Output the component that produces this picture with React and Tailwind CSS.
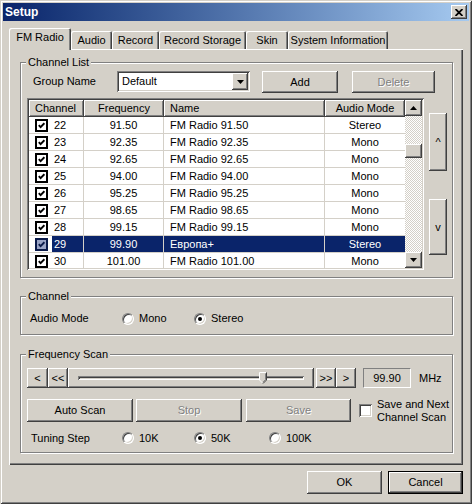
import React from 'react';

const raised = 'bg-[#d4d0c8] shadow-[inset_-1px_-1px_#404040,inset_1px_1px_#fff,inset_-2px_-2px_#808080,inset_2px_2px_#d4d0c8]';
const sunken = 'shadow-[inset_1px_1px_#808080,inset_-1px_-1px_#fff,inset_2px_2px_#404040,inset_-2px_-2px_#d4d0c8]';
const groupBox = 'border border-[#808080] shadow-[inset_1px_1px_#fff,1px_1px_#fff]';
const legendCls = 'ml-[5px] px-[2px] bg-[#d4d0c8] leading-[13px]';
const disabledText = 'text-[#808080] [text-shadow:1px_1px_#fff]';

const channels = [
  { ch: 22, freq: '91.50', name: 'FM Radio 91.50', mode: 'Stereo' },
  { ch: 23, freq: '92.35', name: 'FM Radio 92.35', mode: 'Mono' },
  { ch: 24, freq: '92.65', name: 'FM Radio 92.65', mode: 'Mono' },
  { ch: 25, freq: '94.00', name: 'FM Radio 94.00', mode: 'Mono' },
  { ch: 26, freq: '95.25', name: 'FM Radio 95.25', mode: 'Mono' },
  { ch: 27, freq: '98.65', name: 'FM Radio 98.65', mode: 'Mono' },
  { ch: 28, freq: '99.15', name: 'FM Radio 99.15', mode: 'Mono' },
  { ch: 29, freq: '99.90', name: 'Европа+', mode: 'Stereo', selected: true },
  { ch: 30, freq: '101.00', name: 'FM Radio 101.00', mode: 'Mono' },
];

const tabs = [
  { label: 'FM Radio', cls: 'w-[62px]', active: true },
  { label: 'Audio', cls: 'w-[41px]' },
  { label: 'Record', cls: 'w-[47px]' },
  { label: 'Record Storage', cls: 'w-[87px]' },
  { label: 'Skin', cls: 'w-[42px]' },
  { label: 'System Information', cls: 'w-[100px]' },
];

const CheckMark = ({ color = '#000' }) => (
  <svg width="7" height="7" viewBox="0 0 7 7">
    <polyline points="0.8,3.2 2.6,5.2 6.4,1.2" fill="none" stroke={color} strokeWidth="1.9" />
  </svg>
);

const Triangle = ({ up }) => (
  <svg width="7" height="4" viewBox="0 0 7 4">
    <polygon points={up ? '0,4 7,4 3.5,0' : '0,0 7,0 3.5,4'} fill="#000" />
  </svg>
);

const Radio = ({ checked }) => (
  <span className="w-[12px] h-[12px] rounded-full bg-white flex items-center justify-center border border-t-[#808080] border-l-[#808080] border-b-white border-r-white shadow-[inset_1px_1px_#404040,inset_-1px_-1px_#d4d0c8]">
    {checked && <span className="w-[4px] h-[4px] rounded-full bg-black" />}
  </span>
);

const RadioItem = ({ label, checked, cls }) => (
  <div className={`flex items-center gap-[5px] ${cls}`}>
    <Radio checked={checked} />
    <span>{label}</span>
  </div>
);

const ListCheck = ({ selected }) => (
  <span
    className={`w-[13px] h-[13px] border-2 flex items-center justify-center ${
      selected ? 'border-[#0a1a4a] bg-[#9aa4c6]' : 'border-black bg-white'
    }`}
  >
    <CheckMark color={selected ? '#0a1a4a' : '#000'} />
  </span>
);

const SliderThumb = () => (
  <svg width="8" height="12" viewBox="0 0 8 12">
    <path d="M0.5 0.5 H7.5 V8 L4 11.5 L0.5 8 Z" fill="#d4d0c8" />
    <path d="M0.5 8 V0.5 H7" fill="none" stroke="#fff" />
    <path d="M0.5 8 L3.5 11" fill="none" stroke="#fff" />
    <path d="M7.5 0.5 V8 L4 11.5" fill="none" stroke="#404040" />
    <path d="M6.5 1.5 V7.6 L4 10.2" fill="none" stroke="#808080" />
  </svg>
);

const App = () => {
  return (
    <div className="w-[472px] h-[504px] bg-[#d4d0c8] p-[3px] flex flex-col shadow-[inset_1px_1px_#d4d0c8,inset_-1px_-1px_#404040,inset_2px_2px_#fff,inset_-2px_-2px_#808080] font-['Liberation_Sans',Arial,sans-serif] text-[11px] leading-[13px] text-black select-none">
      {/* title bar */}
      <div className="h-[18px] flex items-center justify-between pl-[2px] pr-[2px] bg-linear-to-r from-[#0a246a] to-[#a6caf0]">
        <span className="text-white font-bold text-[12px] leading-[14px]">Setup</span>
        <div className={`w-[16px] h-[14px] flex items-center justify-center ${raised}`}>
          <svg width="8" height="7" viewBox="0 0 8 7">
            <path d="M0.5 0 L7.5 7 M7.5 0 L0.5 7" stroke="#000" strokeWidth="1.8" />
          </svg>
        </div>
      </div>

      <div className="flex flex-col px-[6px] pt-[7px]">
        {/* tabs */}
        <div className="h-[21px] flex items-end">
          {tabs.map((t) => (
            <div
              key={t.label}
              className={`${t.cls} flex items-center justify-center bg-[#d4d0c8] rounded-t-[2px] shadow-[inset_1px_1px_#fff,inset_-1px_0_#404040,inset_-2px_0_#808080] ${
                t.active ? 'h-[22px] -mb-px relative z-10 pb-[3px]' : 'h-[18px] pt-[1px]'
              }`}
            >
              {t.label}
            </div>
          ))}
        </div>

        {/* panel */}
        <div className="h-[416px] flex flex-col pl-[11px] pt-[7px] shadow-[inset_1px_1px_#fff,inset_-1px_-1px_#404040,inset_-2px_-2px_#808080]">
          {/* Channel List */}
          <fieldset className={`w-[433px] ${groupBox}`}>
            <legend className={legendCls}>Channel List</legend>
            <div className="flex items-start mt-[2px] pl-[12px]">
              <div className="w-[84px] h-[21px] flex items-center">Group Name</div>
              <div className={`w-[133px] h-[21px] bg-white flex items-center p-[2px] ${sunken}`}>
                <span className="flex-1 pl-[3px]">Default</span>
                <div className={`w-[16px] h-[17px] flex items-center justify-center ${raised}`}>
                  <Triangle />
                </div>
              </div>
              <div className={`ml-[12px] w-[76px] h-[22px] flex items-center justify-center ${raised}`}>Add</div>
              <div className={`ml-[14px] w-[83px] h-[22px] flex items-center justify-center ${raised} ${disabledText}`}>
                Delete
              </div>
            </div>

            <div className="flex mt-[5px] pl-[6px] pb-[7px]">
              <div className={`w-[397px] h-[172px] p-[2px] flex bg-white ${sunken}`}>
                <div className="w-[376px] flex flex-col overflow-hidden">
                  <div className="h-[17px] flex shrink-0">
                    <div className={`w-[55px] flex items-center pl-[6px] ${raised}`}>Channel</div>
                    <div className={`w-[80px] flex items-center justify-center ${raised}`}>Frequency</div>
                    <div className={`w-[161px] flex items-center pl-[6px] ${raised}`}>Name</div>
                    <div className={`w-[80px] flex items-center justify-center ${raised}`}>Audio Mode</div>
                  </div>
                  {channels.map((c) => (
                    <div key={c.ch} className="h-[17px] shrink-0 flex border-b border-[#d4d0c8]">
                      <div className="w-[55px] flex items-stretch border-r border-[#d4d0c8]">
                        <div className="w-[23px] flex items-center pl-[6px]">
                          <ListCheck selected={c.selected} />
                        </div>
                        <div className={`flex-1 flex items-center pl-[2px] ${c.selected ? 'bg-[#0a246a] text-white' : ''}`}>
                          {c.ch}
                        </div>
                      </div>
                      <div className={`w-[80px] flex items-center justify-center border-r border-[#d4d0c8] ${c.selected ? 'bg-[#0a246a] text-white' : ''}`}>
                        {c.freq}
                      </div>
                      <div className={`w-[161px] flex items-center pl-[6px] border-r border-[#d4d0c8] ${c.selected ? 'bg-[#0a246a] text-white' : ''}`}>
                        {c.name}
                      </div>
                      <div className={`w-[80px] flex items-center justify-center ${c.selected ? 'bg-[#0a246a] text-white' : ''}`}>
                        {c.mode}
                      </div>
                    </div>
                  ))}
                </div>
                {/* scrollbar */}
                <div className="w-[17px] flex flex-col bg-[image:repeating-conic-gradient(#d4d0c8_0_25%,#ffffff_0_50%)] bg-size-[2px_2px]">
                  <div className={`h-[16px] flex items-center justify-center ${raised}`}>
                    <Triangle up />
                  </div>
                  <div className="flex-1 flex flex-col">
                    <div className={`mt-[28px] h-[14px] ${raised}`} />
                  </div>
                  <div className={`h-[16px] flex items-center justify-center ${raised}`}>
                    <Triangle />
                  </div>
                </div>
              </div>
              <div className="ml-[5px] w-[18px] flex flex-col">
                <div className={`mt-[15px] h-[58px] flex items-center justify-center ${raised}`}>^</div>
                <div className={`mt-[28px] h-[56px] flex items-center justify-center ${raised}`}>v</div>
              </div>
            </div>
          </fieldset>

          {/* Channel */}
          <fieldset className={`w-[433px] mt-[12px] ${groupBox}`}>
            <legend className={legendCls}>Channel</legend>
            <div className="flex items-center h-[17px] mt-[7px] mb-[7px] pl-[9px]">
              <div className="w-[92px]">Audio Mode</div>
              <RadioItem label="Mono" cls="w-[72px]" />
              <RadioItem label="Stereo" checked />
            </div>
          </fieldset>

          {/* Frequency Scan */}
          <fieldset className={`w-[433px] mt-[13px] ${groupBox}`}>
            <legend className={legendCls}>Frequency Scan</legend>
            <div className="flex items-center h-[20px] mt-[7px] pl-[6px]">
              <div className={`w-[21px] h-[20px] flex items-center justify-center ${raised}`}>&lt;</div>
              <div className={`w-[20px] h-[20px] flex items-center justify-center ${raised}`}>&lt;&lt;</div>
              <div className={`w-[246px] h-[20px] flex items-center px-[10px] ${raised}`}>
                <div className="flex-1 h-[4px] relative shadow-[inset_1px_1px_#808080,inset_-1px_-1px_#fff,inset_2px_2px_#404040]">
                  <div className="absolute left-[181px] top-[-4px] flex">
                    <SliderThumb />
                  </div>
                </div>
              </div>
              <div className={`ml-[2px] w-[20px] h-[20px] flex items-center justify-center ${raised}`}>&gt;&gt;</div>
              <div className={`w-[20px] h-[20px] flex items-center justify-center ${raised}`}>&gt;</div>
              <div className="ml-[7px] w-[48px] h-[20px] flex items-center justify-center border border-t-[#808080] border-l-[#808080] border-b-white border-r-white">
                99.90
              </div>
              <span className="ml-[8px]">MHz</span>
            </div>

            <div className="flex items-center h-[23px] mt-[11px] pl-[6px]">
              <div className={`w-[106px] h-[23px] flex items-center justify-center ${raised}`}>Auto Scan</div>
              <div className={`ml-[3px] w-[106px] h-[23px] flex items-center justify-center ${raised} ${disabledText}`}>Stop</div>
              <div className={`ml-[4px] w-[105px] h-[23px] flex items-center justify-center ${raised} ${disabledText}`}>Save</div>
              <span className={`ml-[8px] w-[13px] h-[13px] bg-white ${sunken}`} />
              <span className="ml-[5px] leading-[13px]">
                Save and Next
                <br />
                Channel Scan
              </span>
            </div>

            <div className="flex items-center h-[16px] mt-[8px] mb-[6px] pl-[10px]">
              <div className="w-[91px]">Tuning Step</div>
              <RadioItem label="10K" cls="w-[72px]" />
              <RadioItem label="50K" checked cls="w-[75px]" />
              <RadioItem label="100K" />
            </div>
          </fieldset>
        </div>

        {/* dialog buttons */}
        <div className="flex justify-end gap-[6px] mt-[6px]">
          <div className={`w-[75px] h-[23px] flex items-center justify-center ${raised}`}>OK</div>
          <div className="w-[75px] h-[23px] border border-black flex">
            <div className={`flex-1 flex items-center justify-center ${raised}`}>Cancel</div>
          </div>
        </div>
      </div>
    </div>
  );
};

export default App;
